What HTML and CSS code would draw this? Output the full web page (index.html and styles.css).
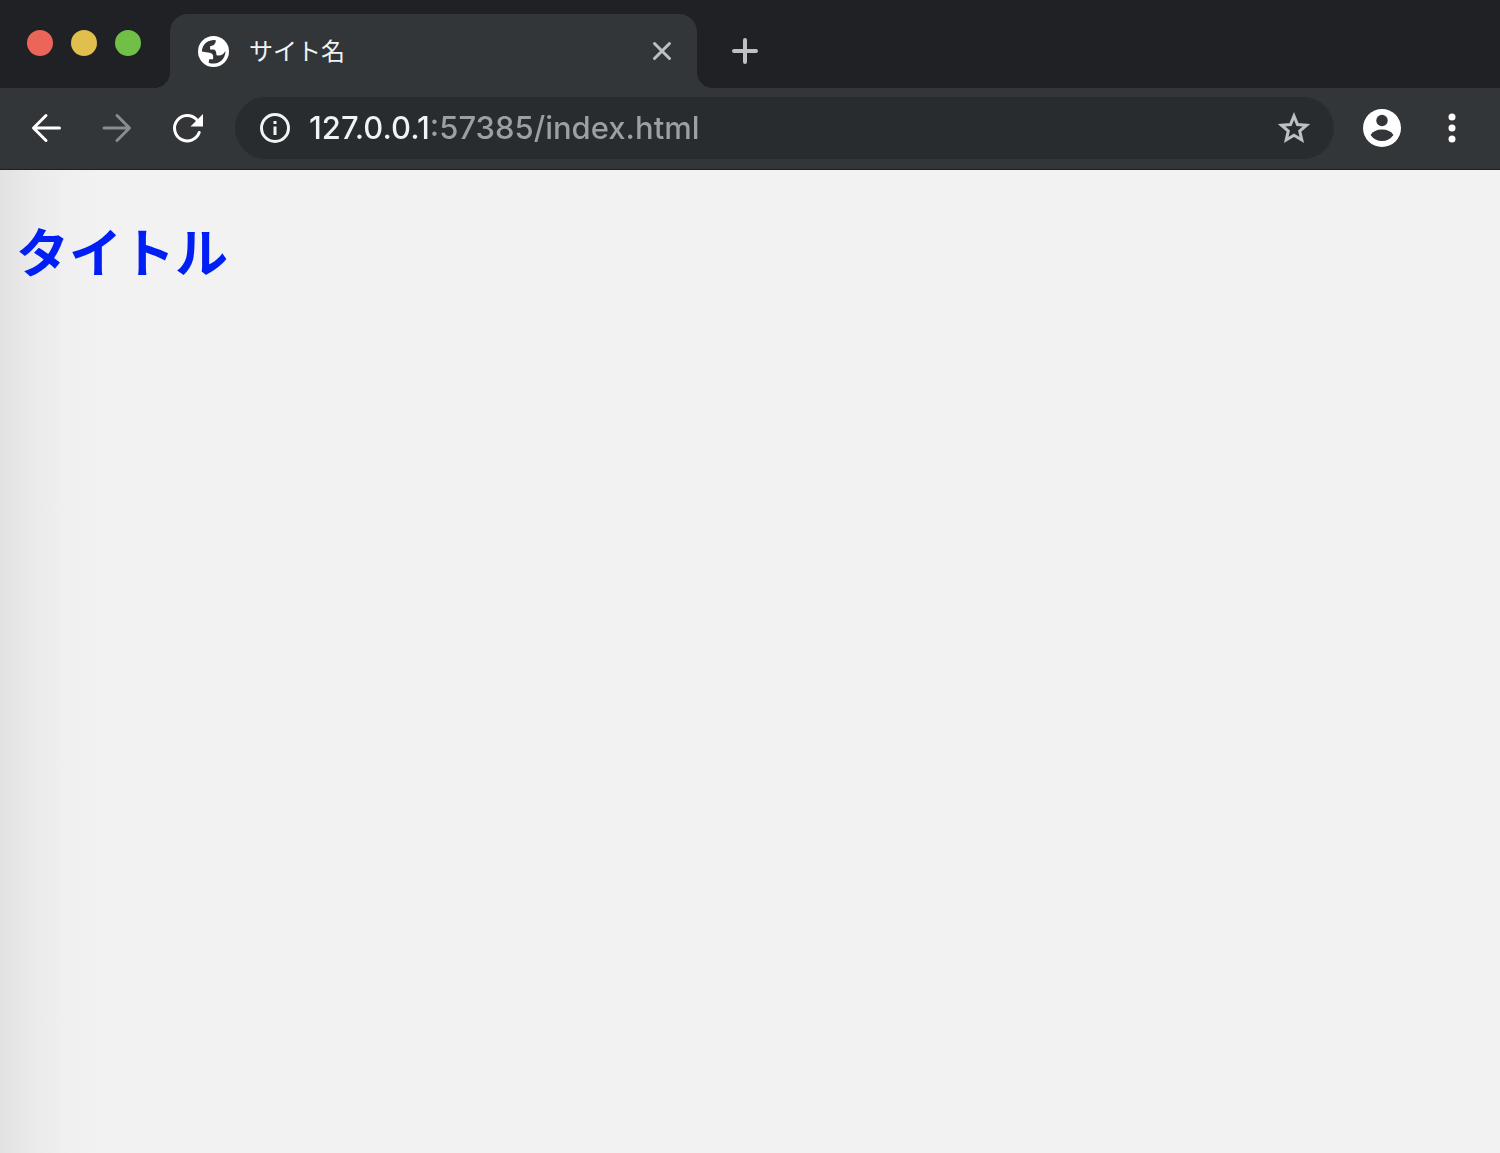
FILE: index.html
```
<!DOCTYPE html>
<html lang="ja">
<head>
    <meta charset="UTF-8">
    <meta name="viewport" content="width=device-width, initial-scale=1.0">
    <title>サイト名</title>
    <link rel="stylesheet" href="styles.css">
</head>
<body>
    <header>
        <div class="tab-strip">
            <div class="window-buttons">
                <button class="close" aria-label="閉じる"></button>
                <button class="minimize" aria-label="最小化"></button>
                <button class="maximize" aria-label="最大化"></button>
            </div>
            <div class="tab">
                <svg class="favicon" viewBox="0 0 32 32">
                    <circle cx="16" cy="16" r="16" fill="#fff"/>
                    <path d="M4 16A12 12 0 0 1 18.500 4.500Q18.500 8 16 9.500L12.500 10.500 12.500 14H15.500Q19 14 19 19.500Q22 21 26 18.500L28.300 15.500A12.500 12.500 0 0 1 11 27.500L11.500 24H15.600V20Q14.500 17 10 17Z" fill="#323639"/>
                </svg>
                <span class="tab-title">サイト名</span>
                <button class="tab-close" aria-label="タブを閉じる">
                    <svg width="20" height="20" viewBox="0 0 20 20"><path d="M2.500 2.500 17.500 17.500M17.500 2.500 2.500 17.500"/></svg>
                </button>
            </div>
            <button class="new-tab" aria-label="新しいタブ">
                <svg width="28" height="28" viewBox="0 0 28 28"><path d="M14 3V25M3 14H25"/></svg>
            </button>
        </div>
        <div class="toolbar">
            <button aria-label="戻る">
                <svg class="line" width="32" height="32" viewBox="0 0 32 32"><path d="M29.500 16H4M16 3.500 3.500 16 16 28.500"/></svg>
            </button>
            <button class="forward" aria-label="進む" disabled>
                <svg class="line" width="32" height="32" viewBox="0 0 32 32"><path d="M3 16H28M16 3.500 28.500 16 16 28.500"/></svg>
            </button>
            <button aria-label="再読み込み">
                <svg class="line" width="32" height="32" viewBox="0 0 32 32"><path d="M27.200 20.500A12.700 12.700 0 1 1 24.500 7.500"/><path class="solid" d="M31 2V14.500H18.500Z"/></svg>
            </button>
            <div class="address-bar">
                <svg class="info" width="32" height="32" viewBox="0 0 32 32"><circle cx="16" cy="16" r="13.500"/><path d="M16 14.500V23M16 9V12"/></svg>
                <input type="text" value="127.0.0.1:57385/index.html" aria-label="アドレス">
                <button class="bookmark" aria-label="ブックマーク">
                    <svg width="32" height="32" viewBox="0 0 32 32"><path d="M16 4 19.500 12.500 28.500 13.200 21.700 19 23.800 28 16 23.300 8.200 28 10.300 19 3.500 13.200 12.500 12.500Z"/></svg>
                </button>
            </div>
            <button class="profile" aria-label="プロフィール">
                <svg width="38" height="38" viewBox="0 0 38 38"><circle cx="19" cy="19" r="19" fill="#fff"/><circle cx="19" cy="11.500" r="5.700" fill="#323639"/><path d="M7.500 26Q11 20.500 19 20.500T30.500 26Q26 32 19 32T7.500 26Z" fill="#323639"/></svg>
            </button>
            <button class="menu" aria-label="メニュー">
                <svg width="8" height="32" viewBox="0 0 8 32" fill="#fff"><circle cx="4" cy="5" r="3.500"/><circle cx="4" cy="16" r="3.500"/><circle cx="4" cy="27" r="3.500"/></svg>
            </button>
        </div>
    </header>
    <main>
        <h1>タイトル</h1>
    </main>
</body>
</html>
```
FILE: styles.css
```
* {
    box-sizing: border-box;
}
body {
    display: flex;
    flex-direction: column;
    min-height: 100vh;
    margin: 0;
    font-family: "Noto Sans CJK JP", sans-serif;
    background-color: #f2f2f2;
}
button {
    display: flex;
    align-items: center;
    justify-content: center;
    flex: none;
    padding: 0;
    border: none;
    background: none;
}
svg {
    display: block;
    flex: none;
}
.tab-strip {
    display: flex;
    align-items: flex-end;
    height: 88px;
    background-color: #202124;
}
.window-buttons {
    display: flex;
    align-items: center;
    gap: 18px;
    height: 88px;
    width: 170px;
    padding: 0 0 2px 27px;
}
.window-buttons button {
    width: 26px;
    height: 26px;
    border-radius: 50%;
}
.close {
    background-color: #ec6559;
}
.minimize {
    background-color: #e0bf4c;
}
.maximize {
    background-color: #72bf47;
}
.tab {
    position: relative;
    display: flex;
    align-items: center;
    width: 527px;
    height: 74px;
    padding: 0 25px 0 28px;
    border-radius: 18px 18px 0 0;
    background-color: #323639;
}
/* curved feet on both sides of the tab */
.tab::before,
.tab::after {
    content: "";
    position: absolute;
    bottom: 0;
    width: 16px;
    height: 16px;
}
.tab::before {
    right: 100%;
    background: radial-gradient(circle at 0 0, #202124 16px, #323639 16px);
}
.tab::after {
    left: 100%;
    background: radial-gradient(circle at 100% 0, #202124 16px, #323639 16px);
}
.favicon {
    width: 31px;
    height: 31px;
}
.tab-title {
    flex: 1;
    margin-left: 20px;
    padding-bottom: 2px;
    font-size: 24px;
    line-height: 32px;
    color: #f1f3f4;
}
.tab-close svg {
    stroke: #bdc1c6;
    stroke-width: 3;
    stroke-linecap: round;
}
.new-tab {
    height: 74px;
    margin-left: 34px;
}
.new-tab svg {
    stroke: #bdc1c6;
    stroke-width: 4;
    stroke-linecap: round;
}
.toolbar {
    display: flex;
    align-items: center;
    height: 82px;
    padding: 0 44px 2px 30px;
    border-bottom: 1px solid #1d1f21;
    background-color: #323639;
}
.toolbar > button + button {
    margin-left: 39px;
}
.toolbar > .menu {
    margin-left: 47px;
}
.line {
    fill: none;
    stroke: #fff;
    stroke-width: 3;
    stroke-linecap: round;
    stroke-linejoin: round;
}
.line .solid {
    fill: #fff;
    stroke: none;
}
.forward .line {
    stroke: #8a8c8e;
}
.address-bar {
    display: flex;
    align-items: center;
    flex: 1;
    height: 62px;
    margin: 0 29px 0 31px;
    padding: 0 24px;
    border-radius: 31px;
    background-color: #282c2f;
}
.info {
    fill: none;
    stroke: #f1f3f4;
    stroke-width: 3;
}
.address-bar input {
    flex: 1;
    min-width: 0;
    height: 40px;
    margin: 0 18px;
    padding: 0;
    border: none;
    outline: none;
    font-family: Inter, sans-serif;
    font-size: 31px;
    font-weight: 500;
    color: transparent;
    /* host name is brighter than the port and path */
    background: linear-gradient(to right, #f1f3f4 122px, #9aa0a6 122px);
    -webkit-background-clip: text;
    background-clip: text;
}
.bookmark svg {
    fill: none;
    stroke: #bdc1c6;
    stroke-width: 3;
}
main {
    flex: 1;
    padding: 0 16px;
    background: linear-gradient(to right, #e2e2e2, #ebebeb 36px, #f0f0f0 70px, #f2f2f2 100px);
}
h1 {
    margin: 42px 0;
    font-size: 53px;
    line-height: 76px;
    color: #001ff5;
}
```
